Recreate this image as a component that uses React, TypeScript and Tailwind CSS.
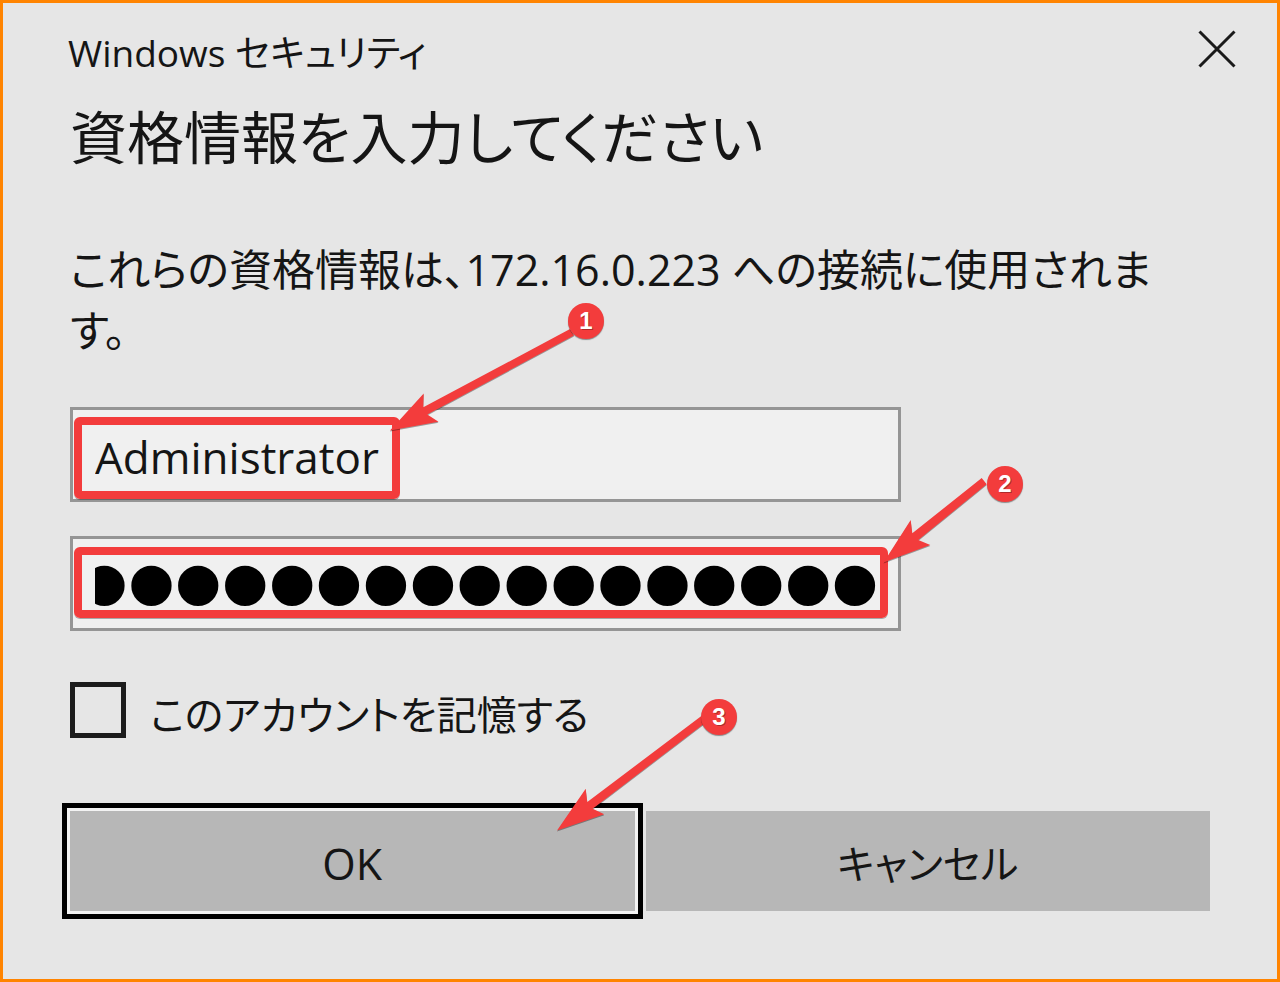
import React, { useEffect, useRef } from "react";

const arrows = [
  "390,430.5 423.7,393.5 423.3,407.3 570,329 574,335.5 427.3,414.5 438.5,421.8",
  "883.5,562.5 910.7,520 912.3,533.3 981.7,478 986.7,484.3 918.3,540 930.3,545",
  "557,830.5 585.7,788.7 587.3,802 704,714 707,721.5 592.7,808.7 604.3,814.3",
];

function Badge({ n, className }: { n: number; className: string }) {
  return (
    <span
      className={
        "absolute flex size-9 items-center justify-center rounded-full bg-[#f33c3c] font-['Liberation_Sans',sans-serif] text-[24px] leading-none font-bold text-white shadow-[0_1px_1px_rgba(0,0,0,0.4)] text-shadow-[1px_1px_0_rgba(0,0,0,0.3)] " +
        className
      }
    >
      {n}
    </span>
  );
}

function Highlight({ className }: { className: string }) {
  return (
    <span
      className={
        "pointer-events-none absolute left-1 rounded-md border-8 border-[#f33c3c] shadow-[0_1px_0_rgba(0,0,0,0.3)] " +
        className
      }
    />
  );
}

export default function App() {
  const password = useRef<HTMLInputElement>(null);

  // Keep the end of the password in view, as after typing it.
  useEffect(() => {
    const el = password.current;
    if (el) el.scrollLeft = el.scrollWidth;
  }, []);

  return (
    <main className="relative flex min-h-screen flex-col border-3 border-[#ff8400] bg-[#e6e6e6] font-['Open_Sans','Noto_Sans_CJK_JP',sans-serif] text-[#151515] [font-feature-settings:'palt']">
      <header className="flex items-start justify-between pt-[22px] pr-10 pl-[65px]">
        <h1 className="text-[37px] leading-[56px]">Windows セキュリティ</h1>
        <button type="button" aria-label="閉じる" className="mt-1">
          <svg viewBox="0 0 40 40" className="size-10" fill="none" stroke="#1a1a1a" strokeWidth="3">
            <path d="M2.5 2.5 37.5 37.5M37.5 2.5 2.5 37.5" />
          </svg>
        </button>
      </header>

      <form className="flex flex-col px-[67px]" onSubmit={(e) => e.preventDefault()}>
        <h2 className="mt-4 text-[57px] leading-[80px]">資格情報を入力してください</h2>
        <p className="mt-[62px] pr-10 text-[43px] leading-[61px]">
          これらの資格情報は、172.16.0.223 への接続に使用されます。
        </p>

        <div className="relative mt-[46px] max-w-[831px]">
          <input
            type="text"
            aria-label="ユーザー名"
            defaultValue="Administrator"
            className="block h-[95px] w-full border-3 border-[#959595] bg-[#f0f0f0] pt-1 pr-[19px] pl-[22px] text-[44px] outline-none"
          />
          <Highlight className="top-[10px] h-[82px] w-[326px]" />
        </div>

        <div className="relative mt-[34px] max-w-[831px]">
          <input
            ref={password}
            type="password"
            aria-label="パスワード"
            defaultValue="00000000000000000"
            className="block h-[95px] w-full border-3 border-[#959595] bg-[#f0f0f0] pr-[19px] pl-[22px] font-['Liberation_Sans',sans-serif] text-[134px] leading-[89px] text-black outline-none [-webkit-text-stroke:4px_black]"
          />
          <Highlight className="top-[11px] right-[13px] h-[71px]" />
        </div>

        <div className="mt-[43px] flex items-center gap-6">
          <input
            id="remember"
            type="checkbox"
            className="size-14 shrink-0 appearance-none border-5 border-[#1c1c1c] bg-[#e6e6e6] checked:bg-[#1c1c1c]"
          />
          <label htmlFor="remember" className="pt-[10px] text-[40px] leading-[62px]">
            このアカウントを記憶する
          </label>
        </div>

        <div className="mt-[65px] mb-[65px] grid grid-cols-2 gap-[11px] text-[40px]">
          <button
            type="submit"
            className="h-[100px] bg-[#b7b7b7] pt-[6px] text-[43px] ring-3 ring-[#f3f3f3] outline-5 outline-offset-3 outline-black"
          >
            OK
          </button>
          <button type="button" className="h-[100px] bg-[#b7b7b7] pt-[6px]">
            キャンセル
          </button>
        </div>
      </form>

      <svg
        viewBox="0 0 1280 982"
        className="pointer-events-none absolute -top-[3px] -left-[3px] h-[982px] w-[1280px] max-w-none drop-shadow-[0_1px_0_rgba(0,0,0,0.35)]"
        fill="#f33c3c"
        aria-hidden="true"
      >
        {arrows.map((points) => (
          <polygon key={points} points={points} />
        ))}
      </svg>
      <Badge n={1} className="top-[300px] left-[565px]" />
      <Badge n={2} className="top-[463px] left-[984px]" />
      <Badge n={3} className="top-[696px] left-[698px]" />
    </main>
  );
}
